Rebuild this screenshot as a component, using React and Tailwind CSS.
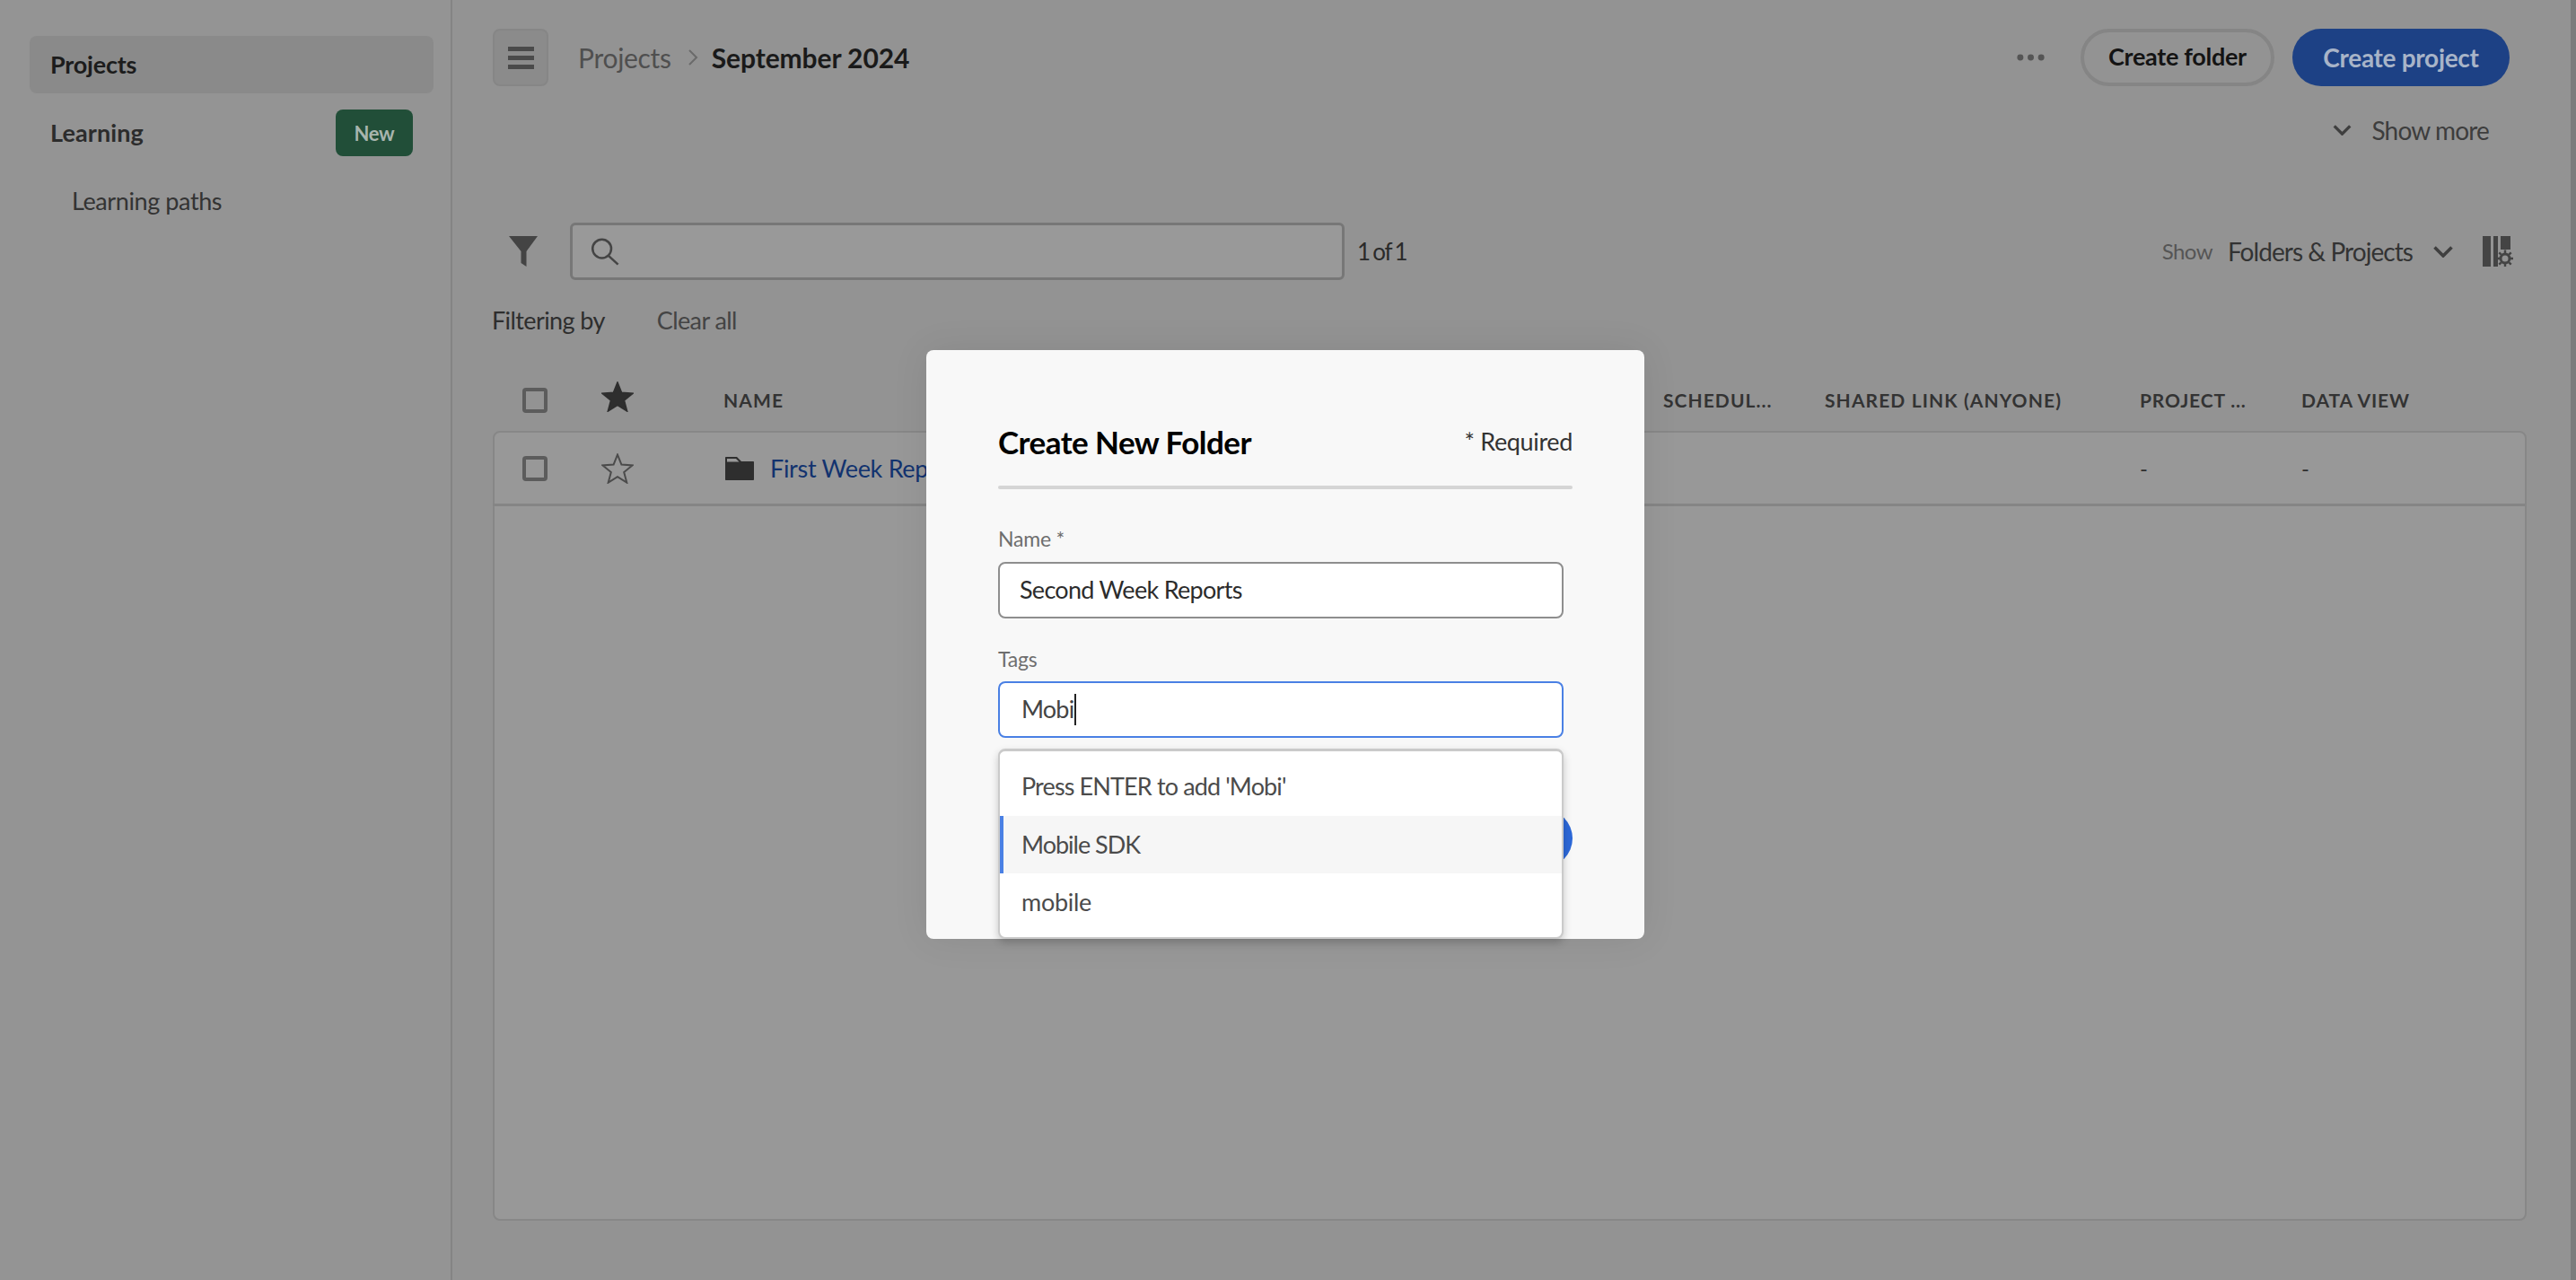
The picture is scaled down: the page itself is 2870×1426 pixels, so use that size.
import React from "react";

const Chevron = ({ className }) => (
  <svg viewBox="0 0 22 13" className={className} fill="none" stroke="currentColor" strokeWidth="3.6">
    <polyline points="1.5,1.5 11,11 20.5,1.5" />
  </svg>
);

const Star = ({ filled, className = "" }) => (
  <svg viewBox="0 0 36 34" className={"w-[36px] h-[34px] " + className}>
    <polygon
      points="18,1.5 22.4,12.6 34.5,13.4 25.2,21 28.3,32.6 18,26.2 7.7,32.6 10.8,21 1.5,13.4 13.6,12.6"
      fill={filled ? "#2e2e2e" : "none"}
      stroke={filled ? "#2e2e2e" : "#4b4b4b"}
      strokeWidth="2"
    />
  </svg>
);

const Check = () => <div className="ml-[33px] w-[28px] h-[28px] rounded-[4px] border-[4px] border-[#5c5c5c]" />;

const HeadCell = ({ children, className = "" }) => (
  <div className={"text-[21px] font-bold text-[#333333] whitespace-nowrap " + className}>{children}</div>
);

const cols = "grid grid-cols-[121px_137px_1046px_180px_351px_180px_1fr] items-center";

export default function App() {
  return (
    <div className="relative w-full h-[1426px] overflow-hidden flex bg-[#939393] text-[#333333] font-['Lato','Liberation_Sans',sans-serif]">
      <aside className="w-[504px] shrink-0 border-r-2 border-[#848484] bg-[#949494] pt-[40px] pl-[33px] pr-[19px]">
        <div className="h-[64px] rounded-[8px] bg-[#8a8a8a] flex items-center pl-[23px] text-[27px] font-bold text-[#1c1c1c] tracking-[-0.2px]">
          Projects
        </div>
        <div className="mt-[18px] h-[52px] flex items-center justify-between pl-[23px] pr-[23px]">
          <span className="text-[27px] font-bold text-[#2c2c2c] tracking-[0.1px]">Learning</span>
          <span className="w-[86px] h-[52px] rounded-[8px] bg-[#214e38] text-[#a8b5ae] text-[22px] font-bold flex items-center justify-center tracking-[-0.3px]">
            New
          </span>
        </div>
        <div className="mt-[30px] pl-[47px] text-[27px] leading-[40px] text-[#333333] tracking-[-0.4px]">Learning paths</div>
      </aside>

      <main className="flex-1 pl-[45px] pr-[55px] pt-[32px] relative">
        <div className="h-[64px] flex items-center pr-[19px]">
          <div className="w-[62px] h-[64px] rounded-[8px] bg-[#8b8b8b] border-2 border-[#868686] flex flex-col items-center justify-center gap-[5px]">
            <div className="w-[29px] h-[5px] bg-[#4a4a4a]" />
            <div className="w-[29px] h-[5px] bg-[#4a4a4a]" />
            <div className="w-[29px] h-[5px] bg-[#4a4a4a]" />
          </div>
          <span className="ml-[33px] text-[30px] text-[#4f4f4f] tracking-[-0.3px]">Projects</span>
          <svg viewBox="0 0 12 20" className="ml-[18px] w-[12px] h-[20px]" fill="none" stroke="#6a6a6a" strokeWidth="2">
            <polyline points="2,2 10,10 2,18" />
          </svg>
          <span className="ml-[15px] text-[30px] font-bold text-[#1a1a1a] tracking-[-0.1px]">September 2024</span>
          <svg viewBox="0 0 32 8" className="ml-auto w-[31px] h-[8px]" fill="#555555">
            <circle cx="4" cy="4" r="3.6" />
            <circle cx="16" cy="4" r="3.6" />
            <circle cx="28" cy="4" r="3.6" />
          </svg>
          <div className="ml-[40px] w-[216px] h-[64px] rounded-full border-[4px] border-[#858585] flex items-center justify-center pb-[2px] text-[27px] font-bold text-[#141414] tracking-[-0.3px]">
            Create folder
          </div>
          <div className="ml-[20px] w-[242px] h-[64px] rounded-full bg-[#1d4185] flex items-center justify-center text-[28px] font-bold text-[#a8b4c8] tracking-[-0.3px]">
            Create project
          </div>
        </div>

        <div className="mt-[33px] h-[32px] flex items-center justify-end pr-[42px] text-[28px] text-[#3d3d3d] tracking-[-0.85px]">
          <Chevron className="w-[21px] h-[12px] mr-[23px] text-[#3f3f3f]" />
          Show more
        </div>

        <div className="mt-[87px] h-[64px] flex items-center pr-[15px]">
          <svg viewBox="0 0 32 34" className="ml-[18px] w-[32px] h-[34px]" fill="#444444">
            <path d="M0 0H32L19.5 17V34L13.5 30V17Z" />
          </svg>
          <div className="ml-[36px] w-[863px] h-[64px] rounded-[6px] border-[3px] border-[#777777] bg-[#999999] flex items-center pl-[20px]">
            <svg viewBox="0 0 34 32" className="w-[33px] h-[32px]" fill="none" stroke="#444444" strokeWidth="2.6">
              <circle cx="13" cy="13" r="10.7" />
              <line x1="20.5" y1="21" x2="31.5" y2="31" />
            </svg>
          </div>
          <span className="ml-[14px] text-[26px] text-[#2a2a2a] tracking-[-1.2px] [word-spacing:-2px]">1 of 1</span>
          <span className="ml-auto text-[24px] text-[#555555] tracking-[-0.6px]">Show</span>
          <span className="ml-[17px] text-[28px] text-[#333333] tracking-[-0.95px]">Folders &amp; Projects</span>
          <Chevron className="ml-[23px] w-[22px] h-[13px] text-[#3f3f3f]" />
          <svg viewBox="0 0 34 34" className="ml-[33px] w-[34px] h-[34px]" fill="#444444">
            <rect x="0" y="0" width="9" height="34" />
            <rect x="12" y="0" width="5" height="34" />
            <rect x="20" y="0" width="11" height="15" />
            <circle cx="25" cy="25" r="7.5" fill="#939393" />
            <circle cx="25" cy="25" r="5" fill="none" stroke="#444444" strokeWidth="3" />
            <path d="M25 15.5V19M25 31V34.5M15.5 25H19M31 25H34.5M18.3 18.3L20.7 20.7M29.3 29.3L31.7 31.7M18.3 31.7L20.7 29.3M29.3 20.7L31.7 18.3" stroke="#444444" strokeWidth="2.4" />
          </svg>
        </div>

        <div className="mt-[29px] h-[32px] flex items-center text-[27px] -ml-[1px] tracking-[-0.6px]">
          <span className="text-[#2e2e2e]">Filtering by</span>
          <span className="ml-[58px] text-[#444444]">Clear all</span>
        </div>

        <div className={"mt-[38px] h-[69px] " + cols}>
          <Check />
          <Star filled className="-mt-[8px]" />
          <HeadCell className="tracking-[1.1px] -ml-[1px]">NAME</HeadCell>
          <HeadCell className="tracking-[1.05px]">SCHEDUL...</HeadCell>
          <HeadCell className="tracking-[1.1px]">SHARED LINK (ANYONE)</HeadCell>
          <HeadCell className="tracking-[0.85px]">PROJECT ...</HeadCell>
          <HeadCell className="tracking-[0.9px]">DATA VIEW</HeadCell>
        </div>

        <div className="h-[880px] rounded-[8px] border-2 border-[#878787] bg-[#989898]">
          <div className={"-ml-[2px] h-[82px] border-b-[3px] border-[#858585] " + cols}>
            <Check />
            <Star />
            <div className="flex items-center">
              <svg viewBox="0 0 32 26" className="w-[32px] h-[26px] ml-[1px]">
                <path d="M1 0H13L18 5H31C31.6 5 32 5.4 32 6V25C32 25.6 31.6 26 31 26H1C.4 26 0 25.6 0 25V1C0 .4 .4 0 1 0Z" fill="#2e2e2e" />
                <path d="M2 2H12L15.5 5.5H2Z" fill="#989898" />
              </svg>
              <span className="ml-[18px] mt-[2px] text-[27px] text-[#12336f] tracking-[-0.3px] whitespace-nowrap">First Week Reports</span>
            </div>
            <div />
            <div />
            <div className="text-[24px] text-[#2e2e2e]">-</div>
            <div className="text-[24px] text-[#2e2e2e]">-</div>
          </div>
        </div>
      </main>

      <div className="absolute right-0 top-0 w-[6px] h-full bg-[#7c7c7c]" />

      <div className="absolute left-[1032px] top-[390px] w-[800px] h-[656px] rounded-[8px] bg-[#f8f8f8] px-[80px] pt-[80px] shadow-[0_0_40px_rgba(0,0,0,0.08)]">
        <div className="h-[44px] flex items-center justify-between">
          <span className="text-[35px] font-bold text-[#000000] tracking-[-0.55px]">Create New Folder</span>
          <span className="text-[27px] text-[#333333] tracking-[-0.35px]">* Required</span>
        </div>
        <div className="mt-[27px] h-[4px] rounded-full bg-[#d5d5d5]" />
        <div className="mt-[41px] h-[28px] flex items-center text-[23px] text-[#6e6e6e] tracking-[-0.2px]">Name *</div>
        <div className="mt-[12px] w-[630px] h-[63px] rounded-[8px] border-2 border-[#8e8e8e] bg-white flex items-center pl-[22px] text-[27px] text-[#2c2c2c] tracking-[-0.7px]">
          Second Week Reports
        </div>
        <div className="mt-[31px] h-[28px] flex items-center text-[23px] text-[#6e6e6e] tracking-[-0.2px]">Tags</div>
        <div className="mt-[11px] w-[630px] h-[63px] rounded-[8px] border-2 border-[#4a80e4] bg-white flex items-center pl-[24px] text-[27px] text-[#444444] tracking-[-0.8px]">
          Mobi
          <span className="ml-[1px] w-[2px] h-[35px] bg-[#222222]" />
        </div>
        <div className="mt-[80px] flex justify-end">
          <div className="w-[200px] h-[64px] rounded-full bg-[#2c68d8] flex items-center justify-center text-[27px] font-bold text-white">Create</div>
        </div>

        <div className="absolute left-[80px] top-[444px] w-[630px] h-[212px] rounded-[8px] border-2 border-t-[3px] border-[#cacaca] bg-white pt-[7px] overflow-hidden shadow-[0_4px_10px_rgba(0,0,0,0.2)] text-[27px] text-[#4b4b4b]">
          <div className="h-[65px] flex items-center pl-[24px] tracking-[-0.87px]">Press ENTER to add 'Mobi'</div>
          <div className="h-[64px] flex items-center pl-[20px] border-l-[4px] border-[#4a80e4] bg-[#f6f6f6] tracking-[-1px]">Mobile SDK</div>
          <div className="h-[65px] flex items-center pl-[24px] tracking-[-0.3px]">mobile</div>
        </div>
      </div>
    </div>
  );
}
